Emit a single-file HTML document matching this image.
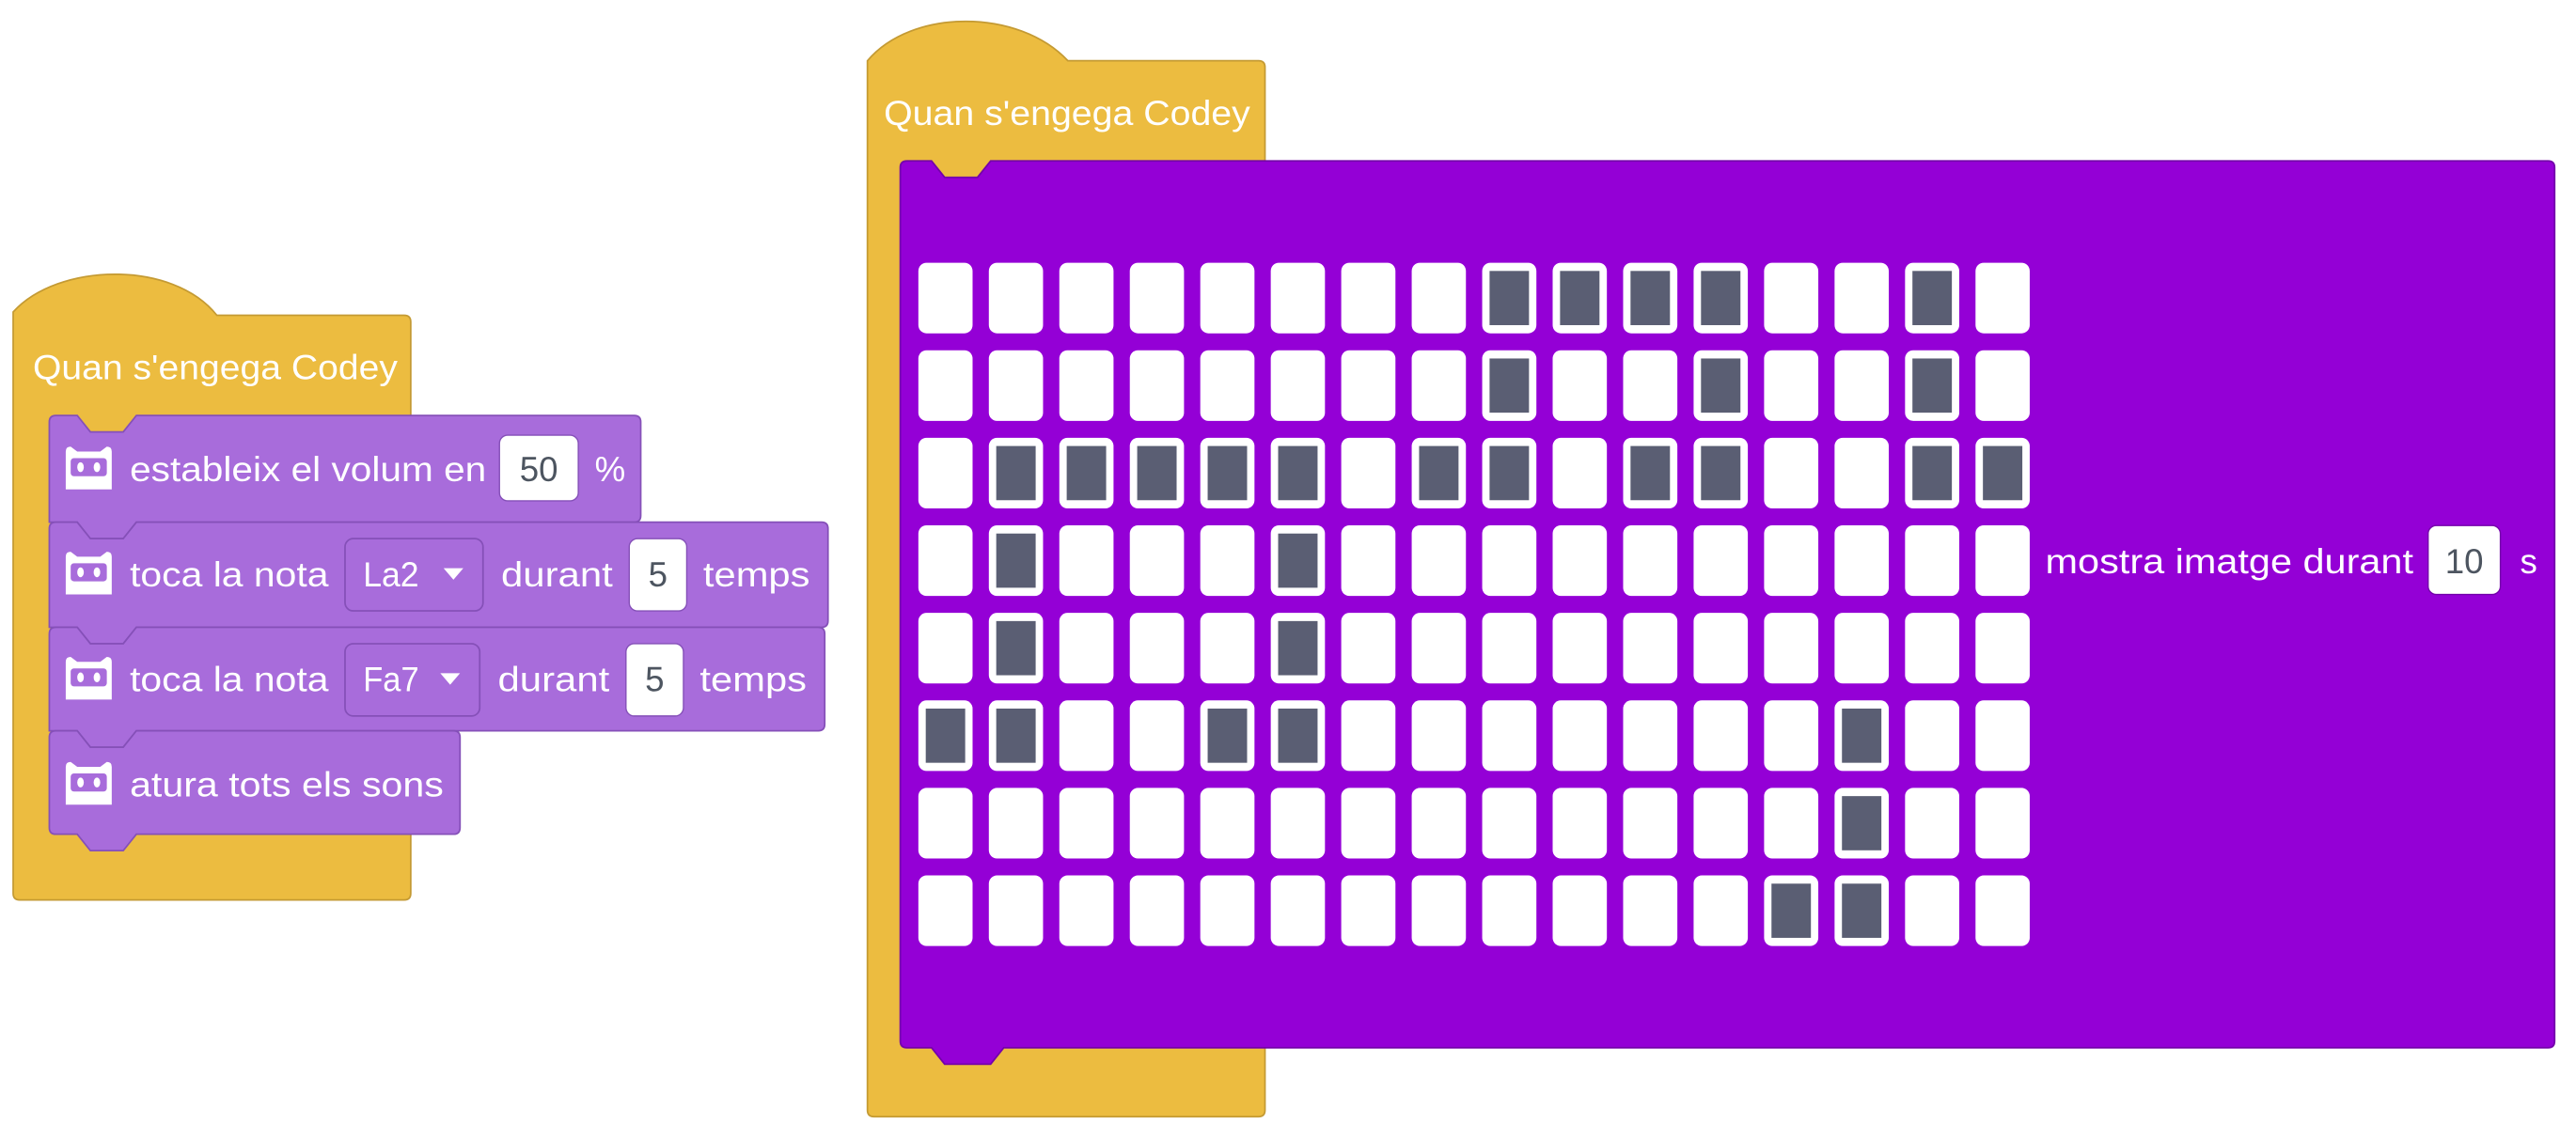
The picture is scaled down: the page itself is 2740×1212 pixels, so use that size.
<!DOCTYPE html>
<html><head><meta charset="utf-8"><style>
html,body{margin:0;padding:0;background:#fff;width:2740px;height:1212px;overflow:hidden}
svg{display:block}
text{font-family:"Liberation Sans",sans-serif;fill:#fff}
</style></head><body>
<svg width="2740" height="1212" viewBox="0 0 1568 693.6" xmlns="http://www.w3.org/2000/svg">
<defs>
<rect id="c" width="33" height="43" rx="5" fill="#fff"/>
<g id="l"><rect width="33" height="43" rx="5" fill="#fff"/><rect x="4.5" y="5" width="24" height="33" fill="#5a5e73"/></g>
<g id="ico">
<path d="M0,3 Q0,0 3,0 L7,3 L21,3 L25,0 Q28,0 28,3 L28,26 L0,26 Z" fill="#fff"/>
<rect x="3" y="7" width="22" height="11" rx="2" fill="#a86cdb"/>
<ellipse cx="9" cy="12.5" rx="2" ry="3" fill="#fff"/>
<ellipse cx="19" cy="12.5" rx="2" ry="3" fill="#fff"/>
</g>
</defs>

<!-- LEFT STACK -->
<path d="M8,190 C35,160 105,158 132,192 L246,192 Q250,192 250,196 L250,544 Q250,548 246,548 L12,548 Q8,548 8,544 Z" fill="#ecbc40" stroke="#c49a33" stroke-width="1"/>
<text x="20" y="231" font-size="21" textLength="222" lengthAdjust="spacingAndGlyphs">Quan s'engega Codey</text>

<!-- block 1 -->
<path d="M34,253 L47,253 L55,263 L75,263 L83,253 L386,253 Q390,253 390,257 L390,314 Q390,318 386,318 L83,318 L75,328 L55,328 L47,318 L30,318 L30,257 Q30,253 34,253 Z" fill="#a86cdb" stroke="#8550b8" stroke-width="1"/>
<use href="#ico" x="40" y="272"/>
<text x="79" y="293" font-size="21" textLength="217" lengthAdjust="spacingAndGlyphs">estableix el volum en</text>
<rect x="304" y="265" width="48" height="40" rx="5" fill="#fff" stroke="#8550b8" stroke-width="0.8"/>
<text x="328" y="293" font-size="21" text-anchor="middle" style="fill:#4d5560">50</text>
<text x="362" y="293" font-size="21">%</text>

<!-- block 2 -->
<path d="M34,318 L47,318 L55,328 L75,328 L83,318 L500,318 Q504,318 504,322 L504,378 Q504,382 500,382 L83,382 L75,392 L55,392 L47,382 L30,382 L30,322 Q30,318 34,318 Z" fill="#a86cdb" stroke="#8550b8" stroke-width="1"/>
<use href="#ico" x="40" y="336"/>
<text x="79" y="357" font-size="21" textLength="121" lengthAdjust="spacingAndGlyphs">toca la nota</text>
<rect x="210" y="328" width="84" height="44" rx="5" fill="#a86cdb" stroke="#8550b8" stroke-width="1"/>
<text x="221" y="357" font-size="21" textLength="34" lengthAdjust="spacingAndGlyphs">La2</text>
<path d="M270,346 L282,346 L276,353 Z" fill="#fff"/>
<text x="305" y="357" font-size="21" textLength="68" lengthAdjust="spacingAndGlyphs">durant</text>
<rect x="383" y="328" width="35" height="44" rx="5" fill="#fff" stroke="#8550b8" stroke-width="0.8"/>
<text x="400.5" y="357" font-size="21" text-anchor="middle" style="fill:#4d5560">5</text>
<text x="428" y="357" font-size="21" textLength="65" lengthAdjust="spacingAndGlyphs">temps</text>

<!-- block 3 -->
<path d="M34,382 L47,382 L55,392 L75,392 L83,382 L498,382 Q502,382 502,386 L502,441 Q502,445 498,445 L83,445 L75,455 L55,455 L47,445 L30,445 L30,386 Q30,382 34,382 Z" fill="#a86cdb" stroke="#8550b8" stroke-width="1"/>
<use href="#ico" x="40" y="400"/>
<text x="79" y="421" font-size="21" textLength="121" lengthAdjust="spacingAndGlyphs">toca la nota</text>
<rect x="210" y="392" width="82" height="44" rx="5" fill="#a86cdb" stroke="#8550b8" stroke-width="1"/>
<text x="221" y="421" font-size="21" textLength="34" lengthAdjust="spacingAndGlyphs">Fa7</text>
<path d="M268,410 L280,410 L274,417 Z" fill="#fff"/>
<text x="303" y="421" font-size="21" textLength="68" lengthAdjust="spacingAndGlyphs">durant</text>
<rect x="381" y="392" width="35" height="44" rx="5" fill="#fff" stroke="#8550b8" stroke-width="0.8"/>
<text x="398.5" y="421" font-size="21" text-anchor="middle" style="fill:#4d5560">5</text>
<text x="426" y="421" font-size="21" textLength="65" lengthAdjust="spacingAndGlyphs">temps</text>

<!-- block 4 -->
<path d="M34,445 L47,445 L55,455 L75,455 L83,445 L276,445 Q280,445 280,449 L280,504 Q280,508 276,508 L83,508 L75,518 L55,518 L47,508 L34,508 Q30,508 30,504 L30,449 Q30,445 34,445 Z" fill="#a86cdb" stroke="#8550b8" stroke-width="1"/>
<use href="#ico" x="40" y="464"/>
<text x="79" y="485" font-size="21" textLength="191" lengthAdjust="spacingAndGlyphs">atura tots els sons</text>

<!-- RIGHT STACK -->
<path d="M528,37 C555,5 620,5 650,37 L766,37 Q770,37 770,41 L770,676 Q770,680 766,680 L532,680 Q528,680 528,676 Z" fill="#ecbc40" stroke="#c49a33" stroke-width="1"/>
<text x="538" y="76" font-size="21" textLength="223" lengthAdjust="spacingAndGlyphs">Quan s'engega Codey</text>
<path d="M552,98 L567,98 L575,108 L595,108 L603,98 L1551,98 Q1555,98 1555,102 L1555,634 Q1555,638 1551,638 L611,638 L603,648 L575,648 L567,638 L552,638 Q548,638 548,634 L548,102 Q548,98 552,98 Z" fill="#9400d6" stroke="#7300aa" stroke-width="1"/>

<g transform="translate(0,160)">
<use href="#c" x="559"/><use href="#c" x="601.9"/><use href="#c" x="644.8"/><use href="#c" x="687.7"/><use href="#c" x="730.6"/><use href="#c" x="773.5"/><use href="#c" x="816.4"/><use href="#c" x="859.3"/><use href="#l" x="902.2"/><use href="#l" x="945.1"/><use href="#l" x="988"/><use href="#l" x="1030.9"/><use href="#c" x="1073.8"/><use href="#c" x="1116.7"/><use href="#l" x="1159.6"/><use href="#c" x="1202.5"/>
</g>
<g transform="translate(0,213.3)">
<use href="#c" x="559"/><use href="#c" x="601.9"/><use href="#c" x="644.8"/><use href="#c" x="687.7"/><use href="#c" x="730.6"/><use href="#c" x="773.5"/><use href="#c" x="816.4"/><use href="#c" x="859.3"/><use href="#l" x="902.2"/><use href="#c" x="945.1"/><use href="#c" x="988"/><use href="#l" x="1030.9"/><use href="#c" x="1073.8"/><use href="#c" x="1116.7"/><use href="#l" x="1159.6"/><use href="#c" x="1202.5"/>
</g>
<g transform="translate(0,266.6)">
<use href="#c" x="559"/><use href="#l" x="601.9"/><use href="#l" x="644.8"/><use href="#l" x="687.7"/><use href="#l" x="730.6"/><use href="#l" x="773.5"/><use href="#c" x="816.4"/><use href="#l" x="859.3"/><use href="#l" x="902.2"/><use href="#c" x="945.1"/><use href="#l" x="988"/><use href="#l" x="1030.9"/><use href="#c" x="1073.8"/><use href="#c" x="1116.7"/><use href="#l" x="1159.6"/><use href="#l" x="1202.5"/>
</g>
<g transform="translate(0,319.9)">
<use href="#c" x="559"/><use href="#l" x="601.9"/><use href="#c" x="644.8"/><use href="#c" x="687.7"/><use href="#c" x="730.6"/><use href="#l" x="773.5"/><use href="#c" x="816.4"/><use href="#c" x="859.3"/><use href="#c" x="902.2"/><use href="#c" x="945.1"/><use href="#c" x="988"/><use href="#c" x="1030.9"/><use href="#c" x="1073.8"/><use href="#c" x="1116.7"/><use href="#c" x="1159.6"/><use href="#c" x="1202.5"/>
</g>
<g transform="translate(0,373.2)">
<use href="#c" x="559"/><use href="#l" x="601.9"/><use href="#c" x="644.8"/><use href="#c" x="687.7"/><use href="#c" x="730.6"/><use href="#l" x="773.5"/><use href="#c" x="816.4"/><use href="#c" x="859.3"/><use href="#c" x="902.2"/><use href="#c" x="945.1"/><use href="#c" x="988"/><use href="#c" x="1030.9"/><use href="#c" x="1073.8"/><use href="#c" x="1116.7"/><use href="#c" x="1159.6"/><use href="#c" x="1202.5"/>
</g>
<g transform="translate(0,426.5)">
<use href="#l" x="559"/><use href="#l" x="601.9"/><use href="#c" x="644.8"/><use href="#c" x="687.7"/><use href="#l" x="730.6"/><use href="#l" x="773.5"/><use href="#c" x="816.4"/><use href="#c" x="859.3"/><use href="#c" x="902.2"/><use href="#c" x="945.1"/><use href="#c" x="988"/><use href="#c" x="1030.9"/><use href="#c" x="1073.8"/><use href="#l" x="1116.7"/><use href="#c" x="1159.6"/><use href="#c" x="1202.5"/>
</g>
<g transform="translate(0,479.8)">
<use href="#c" x="559"/><use href="#c" x="601.9"/><use href="#c" x="644.8"/><use href="#c" x="687.7"/><use href="#c" x="730.6"/><use href="#c" x="773.5"/><use href="#c" x="816.4"/><use href="#c" x="859.3"/><use href="#c" x="902.2"/><use href="#c" x="945.1"/><use href="#c" x="988"/><use href="#c" x="1030.9"/><use href="#c" x="1073.8"/><use href="#l" x="1116.7"/><use href="#c" x="1159.6"/><use href="#c" x="1202.5"/>
</g>
<g transform="translate(0,533.1)">
<use href="#c" x="559"/><use href="#c" x="601.9"/><use href="#c" x="644.8"/><use href="#c" x="687.7"/><use href="#c" x="730.6"/><use href="#c" x="773.5"/><use href="#c" x="816.4"/><use href="#c" x="859.3"/><use href="#c" x="902.2"/><use href="#c" x="945.1"/><use href="#c" x="988"/><use href="#c" x="1030.9"/><use href="#l" x="1073.8"/><use href="#l" x="1116.7"/><use href="#c" x="1159.6"/><use href="#c" x="1202.5"/>
</g>

<text x="1245" y="349" font-size="21" textLength="224" lengthAdjust="spacingAndGlyphs">mostra imatge durant</text>
<rect x="1478" y="320" width="44" height="42" rx="5" fill="#fff" stroke="#7300aa" stroke-width="0.8"/>
<text x="1500" y="349" font-size="21" text-anchor="middle" style="fill:#4d5560">10</text>
<text x="1534" y="349" font-size="21">s</text>
</svg>
</body></html>
